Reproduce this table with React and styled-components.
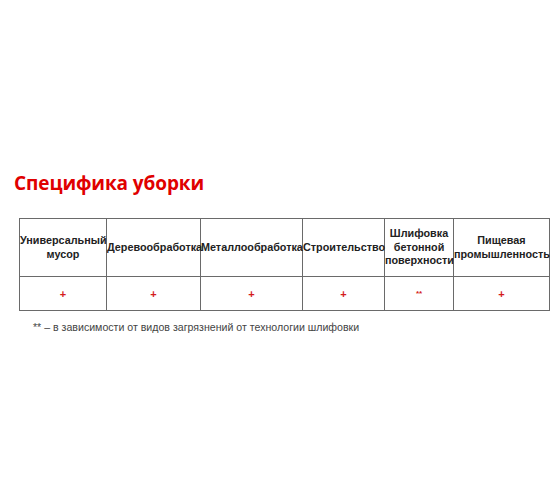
import React from 'react';
import styled, {createGlobalStyle} from 'styled-components';

const GlobalStyle = createGlobalStyle`
  html, body {
    margin: 0;
    padding: 0;
    background: #fff;
  }
`;

const Page = styled.div`
  width: 560px;
  height: 504px;
  box-sizing: border-box;
  padding: 169px 0 0 14px;
  font-family: "Liberation Sans", Arial, sans-serif;
`;

const Title = styled.h2`
  margin: 0 0 21px 0;
  font-family: "Open Sans", sans-serif;
  font-weight: 700;
  font-size: 19px;
  line-height: 28px;
  color: #e00000;
  letter-spacing: -0.1px;
`;

const Table = styled.table`
  margin-left: 5px;
  border-collapse: collapse;
  table-layout: fixed;
  width: 530px;
`;

const Col = styled.col`
  width: ${p => p.w}px;
`;

const HeadCell = styled.th`
  height: 57px;
  padding: 0;
  border: 1px solid #6a6a6a;
  font-size: 10.8px;
  line-height: 13.5px;
  font-weight: 700;
  color: #222;
  text-align: center;
  vertical-align: middle;
  white-space: nowrap;
  overflow: visible;
`;

const Cell = styled.td`
  height: 33px;
  padding: 0;
  border: 1px solid #6a6a6a;
  text-align: center;
  vertical-align: middle;
  color: #d41c1c;
  font-size: ${p => (p.small ? '8px' : '11px')};
  font-weight: 700;
`;

const Note = styled.p`
  margin: 10px 0 0 19px;
  font-size: 10.6px;
  color: #444;
`;

const columns = [
  {w: 87, title: ['Универсальный', 'мусор'], mark: '+'},
  {w: 94, title: ['Деревообработка'], mark: '+'},
  {w: 102, title: ['Металлообработка'], mark: '+'},
  {w: 82, title: ['Строительство'], mark: '+'},
  {w: 69, title: ['Шлифовка', 'бетонной', 'поверхности'], mark: '**'},
  {w: 96, title: ['Пищевая', 'промышленность'], mark: '+'},
];

const App = () => (
  <Page>
    <GlobalStyle />
    <Title>Специфика уборки</Title>
    <Table>
      <colgroup>
        {columns.map(c => <Col key={c.title[0]} w={c.w} />)}
      </colgroup>
      <thead>
        <tr>
          {columns.map(c => (
            <HeadCell key={c.title[0]}>
              {c.title.map((line, i) => (
                <React.Fragment key={line}>
                  {i > 0 && <br />}
                  {line}
                </React.Fragment>
              ))}
            </HeadCell>
          ))}
        </tr>
      </thead>
      <tbody>
        <tr>
          {columns.map(c => (
            <Cell key={c.title[0]} small={c.mark === '**'}>{c.mark}</Cell>
          ))}
        </tr>
      </tbody>
    </Table>
    <Note>** – в зависимости от видов загрязнений от технологии шлифовки</Note>
  </Page>
);

export default App;
